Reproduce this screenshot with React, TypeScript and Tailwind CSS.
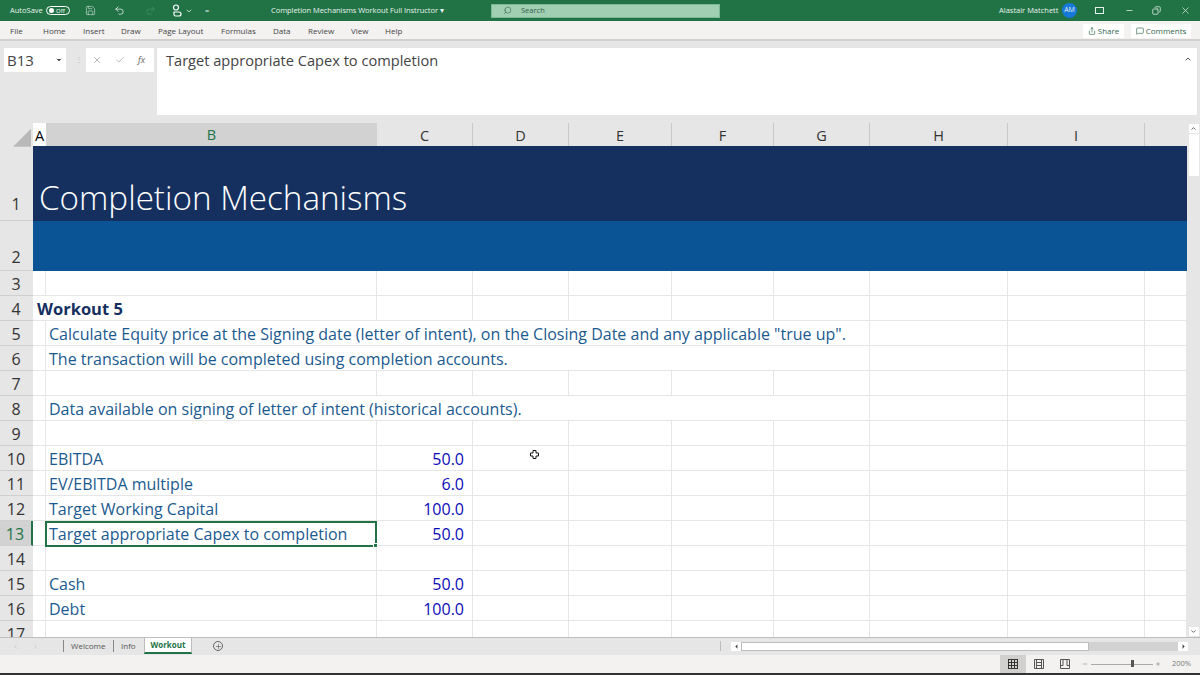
import { Check, ChevronDown, ChevronLeft, ChevronRight, ChevronUp, Copy, MessageSquare, Minus, Plus, Redo2, Save, Search, Share, Undo2, X } from "lucide-react";

const gridCols = "grid grid-cols-[33px_13px_331px_96px_96px_103px_102px_96px_138px_137px_42px]";
const columns = ["C", "D", "E", "F", "G", "H", "I"];

type Row = { n: number; label?: string; value?: string };

function RowNum({ n, selected }: { n: number; selected?: boolean }) {
  return (
    <div className={`flex h-[25px] items-center justify-center border-b border-[#cfcfcf] pt-[1px] pr-[1px] text-[16px] ${selected ? "border-r-2 border-r-[#217346] bg-[#d2d2d2] text-[#217346]" : "bg-[#e6e6e6] text-[#333]"}`}>
      {n}
    </div>
  );
}

function Blank() {
  return <div className="h-[25px] border-r border-b border-[#e6e6e6]" />;
}

function DataRow({ row }: { row: Row }) {
  return (
    <div className={gridCols}>
      <RowNum n={row.n} />
      <Blank />
      <div className="flex h-[25px] items-center truncate border-r border-b border-[#e6e6e6] pt-[2px] pl-[3px] text-[#1b5a8f]">{row.label}</div>
      <div className="flex h-[25px] items-center justify-end border-r border-b border-[#e6e6e6] pt-[2px] pr-[8px] text-[#0b0bb8]">{row.value}</div>
      <Blank /><Blank /><Blank /><Blank /><Blank /><Blank /><Blank />
    </div>
  );
}

function TextRow({ n, text }: { n: number; text: string }) {
  return (
    <div className={gridCols}>
      <RowNum n={n} />
      <Blank />
      <div className="col-span-6 flex h-[25px] items-center border-r border-b border-[#e6e6e6] pt-[2px] pl-[3px] whitespace-nowrap text-[#1b5a8f]">{text}</div>
      <Blank /><Blank /><Blank />
    </div>
  );
}

function TouchIcon() {
  return (
    <svg width="12" height="13" viewBox="0 0 12 13" fill="none" stroke="#fff" strokeWidth="1.2">
      <circle cx="5" cy="3.500" r="2.500" />
      <path d="M3 8h5a2 2 0 0 1 0 4H4.500a1.500 1.500 0 0 1-1.500-1.500z" />
    </svg>
  );
}

function NormalViewIcon() {
  return (
    <svg width="10" height="10" viewBox="0 0 10 10" fill="none" stroke="#333" strokeWidth="1">
      <path d="M.5 0v10M3.500 0v10M6.500 0v10M9.500 0v10M0 .5h10M0 3.500h10M0 6.500h10M0 9.500h10" />
    </svg>
  );
}

function PageLayoutIcon() {
  return (
    <svg width="10" height="10" viewBox="0 0 10 10" fill="none" stroke="#555" strokeWidth="1">
      <path d="M.5.500h9v9h-9zM2.500.500v9M7.500.500v9M2.500 3.500h5M2.500 6.500h5" />
    </svg>
  );
}

function PageBreakIcon() {
  return (
    <svg width="10" height="10" viewBox="0 0 10 10" fill="none" stroke="#555" strokeWidth="1">
      <path d="M.5.500h9v9h-9zM.5 6.500h2.500M7 6.500h2.500M3 .500v6M7 .500v6" />
    </svg>
  );
}

export default function App() {
  return (
    <div className="relative flex h-[675px] w-[1200px] flex-col overflow-hidden bg-[#e6e6e6] font-['Open_Sans',sans-serif]">
      {/* title bar */}
      <div className="flex h-[21px] items-center bg-[#217346] text-[7.500px] text-[#e8f2ec]">
        <span className="ml-[10px] w-[36px]">AutoSave</span>
        <div className="flex h-[9px] w-[24px] items-center gap-[2px] rounded-full border border-white pl-[2px] text-[6px] leading-none text-white">
          <span className="size-[5px] rounded-full bg-white" />Off
        </div>
        <Save className="ml-[15px] size-[11px] text-[#d7e8de]" strokeWidth={1.3} />
        <Undo2 className="ml-[18px] size-[11px] text-white" strokeWidth={1.5} />
        <Redo2 className="ml-[20px] size-[11px] text-[#4b9068]" strokeWidth={1.5} />
        <div className="ml-[15px]"><TouchIcon /></div>
        <ChevronDown className="ml-[2px] size-[8px] text-white" />
        <span className="ml-[12px] w-[5px] leading-none">=</span>
        <span className="ml-[61px] w-[220px] tracking-[-0.05px] whitespace-nowrap">Completion Mechanisms Workout Full Instructor ▾</span>
        <div className="flex h-[14px] w-[229px] items-center border border-[#7bb896] bg-[#a0cfb2] text-[#35604a]">
          <Search className="ml-[11px] size-[9px] -scale-x-100" strokeWidth={1.5} />
          <span className="ml-[9px]">Search</span>
        </div>
        <span className="ml-[279px] w-[57px] whitespace-nowrap">Alastair Matchett</span>
        <span className="ml-[6px] flex size-[15px] items-center justify-center rounded-full bg-[#1678d8] text-[7px]">AM</span>
        <div className="ml-[18px] h-[7px] w-[9px] border border-[#e8f2ec]" />
        <Minus className="ml-[21px] size-[9px]" />
        <Copy className="ml-[18px] size-[9px] -scale-x-100" />
        <X className="ml-[19px] size-[11px]" strokeWidth={1.5} />
      </div>

      {/* ribbon tabs */}
      <div className="flex h-[20px] items-center border-b-2 border-[#d2d0ce] bg-[#f3f2f1] pt-[1px] text-[8px] text-[#444]">
        <span className="ml-[10px] w-[33px]">File</span>
        <span className="w-[40px]">Home</span>
        <span className="w-[38px]">Insert</span>
        <span className="w-[37px]">Draw</span>
        <span className="w-[63px]">Page Layout</span>
        <span className="w-[52px]">Formulas</span>
        <span className="w-[35px]">Data</span>
        <span className="w-[43px]">Review</span>
        <span className="w-[34px]">View</span>
        <span>Help</span>
        <div className="mr-[9px] ml-auto flex gap-[7px] text-[#33664c]">
          <span className="flex h-[14px] w-[41px] items-center justify-center gap-[2px] bg-white"><Share className="size-[8px]" />Share</span>
          <span className="flex h-[14px] w-[60px] items-center justify-center gap-[2px] bg-white"><MessageSquare className="size-[8px]" />Comments</span>
        </div>
      </div>

      {/* formula bar */}
      <div className="flex h-[82px] items-start pt-[7px]">
        <div className="ml-[4px] flex h-[24px] w-[62px] items-center justify-between bg-white pr-[3px] pl-[3px] text-[15px] text-[#444]">
          B13
          <ChevronDown className="size-[8px]" fill="#555" />
        </div>
        <span className="ml-[9px] w-[11px] pt-[5px] text-[8px] text-[#bbb]">⋮</span>
        <div className="flex h-[24px] w-[68px] items-center gap-[13px] bg-white pl-[6px] text-[#aaa]">
          <X className="size-[10px]" />
          <Check className="size-[10px]" />
          <span className="text-[9px] text-[#666] italic">fx</span>
        </div>
        <div className="ml-[3px] flex h-[67px] w-[1040px] justify-between bg-white pt-[2px] pr-[5px] pl-[9px] text-[14.600px] text-[#444]">
          Target appropriate Capex to completion
          <ChevronUp className="mt-[5px] size-[8px] text-[#555]" strokeWidth={3} />
        </div>
      </div>

      {/* sheet */}
      <div className="flex h-[514px] overflow-hidden text-[16px]">
        <div className="w-[1187px] bg-white">
          <div className={`${gridCols} h-[23px] bg-[#e6e6e6] text-[14.500px] text-[#333]`}>
            <div className="flex items-end justify-end pr-[2px] pb-[1px]">
              <div className="size-[18px] shrink-0 bg-[#b8b8b8] [clip-path:polygon(100%_0,100%_100%,0_100%)]" />
            </div>
            <div className="flex items-center justify-center bg-white pt-[1px] text-black">A</div>
            <div className="flex items-center justify-center border-b-2 border-[#217346] bg-[#d2d2d2] pt-[1px] text-[#217346]">B</div>
            {columns.map((c) => (
              <div key={c} className="flex items-center justify-center border-r border-[#c8c8c8] pt-[1px]">{c}</div>
            ))}
            <div />
          </div>

          <div className={gridCols}>
            <div className="flex h-[75px] items-end justify-center border-b border-[#cfcfcf] bg-[#e6e6e6] pr-[1px] pb-[4px] text-[16px] text-[#333]">1</div>
            <div className="col-span-10 flex h-[75px] items-end bg-[#15305f] pl-[6px] text-[33.200px] leading-[46px] font-light text-white">Completion Mechanisms</div>
            <div className="flex h-[50px] items-end justify-center border-b border-[#cfcfcf] bg-[#e6e6e6] pr-[1px] pb-[1px] text-[16px] text-[#333]">2</div>
            <div className="col-span-10 h-[50px] bg-[#0a5394]" />
          </div>

          <DataRow row={{ n: 3 }} />
          <div className={gridCols}>
            <RowNum n={4} />
            <div className="col-span-2 flex h-[25px] items-center border-r border-b border-[#e6e6e6] pt-[2px] pl-[4px] text-[16.500px] font-bold text-[#15305f]">Workout 5</div>
            <Blank /><Blank /><Blank /><Blank /><Blank /><Blank /><Blank /><Blank />
          </div>
          <TextRow n={5} text={'Calculate Equity price at the Signing date (letter of intent), on the Closing Date and any applicable "true up".'} />
          <TextRow n={6} text="The transaction will be completed using completion accounts." />
          <DataRow row={{ n: 7 }} />
          <TextRow n={8} text="Data available on signing of letter of intent (historical accounts)." />
          <DataRow row={{ n: 9 }} />
          <DataRow row={{ n: 10, label: "EBITDA", value: "50.0" }} />
          <DataRow row={{ n: 11, label: "EV/EBITDA multiple", value: "6.0" }} />
          <DataRow row={{ n: 12, label: "Target Working Capital", value: "100.0" }} />
          <div className={gridCols}>
            <RowNum n={13} selected />
            <Blank />
            <div className="relative z-10 -mb-[1px] -ml-[1px] flex h-[26px] items-center border-2 border-[#217346] pl-[2px] text-[#1b5a8f]">
              Target appropriate Capex to completion
              <span className="absolute -right-[3px] -bottom-[3px] size-[5px] border border-white bg-[#217346]" />
            </div>
            <div className="flex h-[25px] items-center justify-end border-r border-b border-[#e6e6e6] pt-[2px] pr-[8px] text-[#0b0bb8]">50.0</div>
            <Blank /><Blank /><Blank /><Blank /><Blank /><Blank /><Blank />
          </div>
          <DataRow row={{ n: 14 }} />
          <DataRow row={{ n: 15, label: "Cash", value: "50.0" }} />
          <DataRow row={{ n: 16, label: "Debt", value: "100.0" }} />
          <DataRow row={{ n: 17 }} />
        </div>

        {/* vertical scrollbar */}
        <div className="flex w-[13px] flex-col items-center bg-[#e6e6e6] text-[#555]">
          <div className="mt-[1px] flex h-[9px] w-[10px] items-center justify-center bg-white"><ChevronUp className="size-[7px]" strokeWidth={3} /></div>
          <div className="mt-[1px] h-[42px] w-[10px] bg-white" />
          <div className="mt-auto mb-[1px] flex h-[9px] w-[10px] items-center justify-center bg-white"><ChevronDown className="size-[7px]" strokeWidth={3} /></div>
        </div>
      </div>

      {/* sheet tabs */}
      <div className="flex h-[18px] items-center border-t border-[#bdbdbd] bg-[#e6e6e6] pb-[1px] text-[8px] text-[#555]">
        <ChevronLeft className="ml-[12px] size-[7px] text-[#bbb]" />
        <ChevronRight className="ml-[13px] size-[7px] text-[#bbb]" />
        <span className="ml-[24px] h-[12px] border-l border-[#888]" />
        <span className="ml-[7px] w-[42px]">Welcome</span>
        <span className="h-[12px] border-l border-[#888]" />
        <span className="ml-[7px] w-[23px]">Info</span>
        <span className="flex h-[16px] w-[48px] items-center justify-center border-x border-b-2 border-x-[#bdbdbd] border-b-[#217346] bg-white font-bold text-[#217346]">Workout</span>
        <span className="ml-[21px] flex size-[10px] items-center justify-center rounded-full border border-[#666]"><Plus className="size-[7px]" /></span>
        <span className="ml-[497px] h-[10px] border-l border-[#bbb]" />
        <div className="ml-[10px] flex h-[9px] w-[10px] items-center justify-center bg-white"><ChevronLeft className="size-[7px]" fill="#333" /></div>
        <div className="h-[9px] w-[348px] border border-[#bdbdbd] bg-white" />
        <div className="h-[9px] w-[89px] bg-[#d2d2d2]" />
        <div className="flex h-[9px] w-[10px] items-center justify-center bg-white"><ChevronRight className="size-[7px]" fill="#333" /></div>
      </div>

      {/* status bar */}
      <div className="flex h-[18px] items-center justify-end bg-[#f3f2f1] text-[7.500px] text-[#777]">
        <div className="flex h-full w-[26px] items-center justify-center bg-[#d2d0ce]"><NormalViewIcon /></div>
        <div className="ml-[8px]"><PageLayoutIcon /></div>
        <div className="ml-[16px]"><PageBreakIcon /></div>
        <Minus className="ml-[12px] size-[6px]" />
        <div className="relative ml-[3px] h-px w-[62px] bg-[#aaa]">
          <span className="absolute top-[-4px] left-[40px] h-[7px] w-[3px] bg-[#555]" />
        </div>
        <Plus className="ml-[2px] size-[6px]" />
        <span className="mr-[9px] ml-[11px]">200%</span>
      </div>
      <div className="h-[2px] bg-[#333]" />

      {/* mouse pointer */}
      <div className="absolute top-[450px] left-[530px]">
        <svg width="9" height="9" viewBox="0 0 9 9" fill="#fff" stroke="#111"><path d="M3 .5h3V3h2.500v3H6v2.500H3V6H.5V3H3z" /></svg>
      </div>
    </div>
  );
}
